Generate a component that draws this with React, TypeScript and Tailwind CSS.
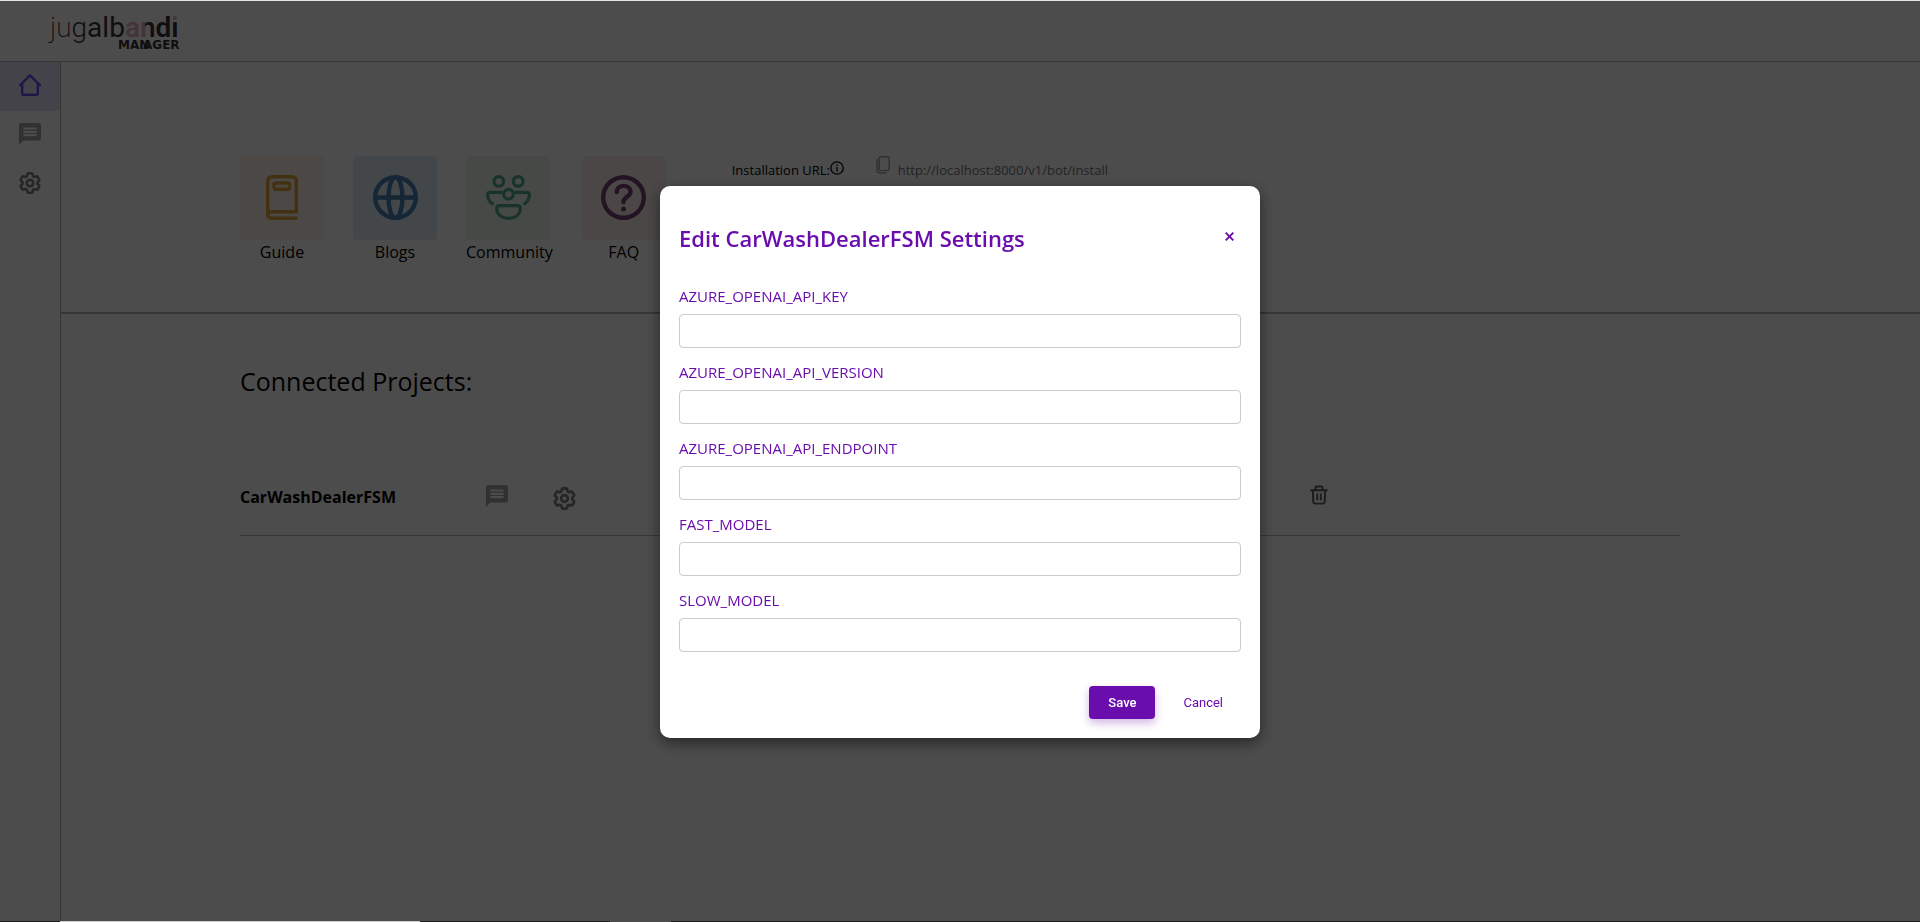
import React from "react";
import { HiOutlineCog6Tooth } from "react-icons/hi2";

const FIELDS = [
  "AZURE_OPENAI_API_KEY",
  "AZURE_OPENAI_API_VERSION",
  "AZURE_OPENAI_API_ENDPOINT",
  "FAST_MODEL",
  "SLOW_MODEL",
];

function Logo() {
  return (
    <svg viewBox="0 0 134 40" className="h-10 w-[134px] overflow-visible" role="img" aria-label="Jugalbandi Manager">
      <defs>
        <linearGradient id="logo-n" gradientUnits="userSpaceOnUse" x1="92" x2="108" y1="0" y2="0">
          <stop offset="0.34" stopColor="#e3adb7" />
          <stop offset="0.34" stopColor="#3a3034" />
        </linearGradient>
        <linearGradient id="logo-i" gradientUnits="userSpaceOnUse" x1="0" x2="0" y1="0" y2="26">
          <stop offset="0.35" stopColor="#e3adb7" />
          <stop offset="0.35" stopColor="#3a3034" />
        </linearGradient>
      </defs>
      <text y="26" fontSize="28" fontFamily="Roboto, sans-serif" fill="#3a3034">
        <tspan x="2" fontWeight="200">ju</tspan>
        <tspan fontWeight="300">g</tspan>
        <tspan fontWeight="400">alb</tspan>
        <tspan fontWeight="500" fill="#e3adb7">a</tspan>
        <tspan fontWeight="500" fill="url(#logo-n)">n</tspan>
        <tspan fontWeight="600">d</tspan>
        <tspan fontWeight="600" fill="url(#logo-i)">i</tspan>
      </text>
      <text y="38" fontSize="12" fontWeight="700" fontFamily="'DejaVu Sans', sans-serif" fill="#3a3034">
        <tspan x="70">MAN</tspan>
        <tspan x="95">AGER</tspan>
      </text>
    </svg>
  );
}

function HomeIcon() {
  return (
    <svg viewBox="0 0 22 22" className="size-[22px]" fill="none" stroke="#6a4ef5" strokeWidth="2.4" strokeLinecap="round" strokeLinejoin="round">
      <path d="M1.2 11.2 L11 1.4 L20.8 11.2 M3.2 9.5 V19.2 Q3.2 20.8 5 20.8 H17 Q18.8 20.8 18.8 19.2 V9.5" />
    </svg>
  );
}

function ChatIcon() {
  return (
    <svg viewBox="2 2 20 20" className="size-[22px]" fill="#a3a3a3">
      <path d="M20 2H4c-1.1 0-1.99.9-1.99 2L2 22l4-4h14c1.1 0 2-.9 2-2V4c0-1.1-.9-2-2-2zm-2 12H6v-2h12v2zm0-3H6V9h12v2zm0-3H6V6h12v2z" />
    </svg>
  );
}

function GuideIcon() {
  return (
    <svg viewBox="0 0 32 45" className="h-[45px] w-8" fill="none" stroke="#e0a63c" strokeWidth="3.4" strokeLinecap="round">
      <path d="M30.3 36.7 V6.5 Q30.3 1.7 25.5 1.7 H6.5 Q1.7 1.7 1.7 6.5 V39 Q1.7 43.3 6.5 43.3 H30.3 M30.3 36.7 H5 Q1.7 36.7 1.7 40" />
      <rect x="8" y="8" width="15.6" height="6.2" rx="2" />
    </svg>
  );
}

function BlogsIcon() {
  return (
    <svg viewBox="0 0 45 45" className="size-[45px]" fill="none" stroke="#4680b4" strokeWidth="4.4">
      <circle cx="22.5" cy="22.5" r="20.3" />
      <ellipse cx="22.5" cy="22.5" rx="7" ry="20.3" />
      <path d="M2 22.5 H43" />
    </svg>
  );
}

function CommunityIcon() {
  return (
    <svg viewBox="0 0 45 45" className="size-[45px]" fill="none" stroke="#50ac8c" strokeWidth="3.2">
      <circle cx="12.8" cy="6.4" r="4.8" />
      <circle cx="32.2" cy="6.4" r="4.8" />
      <circle cx="22.5" cy="19.2" r="4.8" />
      <path d="M16.5 17.3 H4 Q1.6 17.3 1.6 20 Q1.7 26 7.5 29.5 M28.5 17.3 H41 Q43.4 17.3 43.4 20 Q43.3 26 37.5 29.5" />
      <path d="M13.5 30.7 H31.5 Q34.3 30.7 34.3 33.2 C34.3 39.5 29.5 43.3 22.5 43.3 C15.5 43.3 10.7 39.5 10.7 33.2 Q10.7 30.7 13.5 30.7 Z" />
    </svg>
  );
}

function FaqIcon() {
  return (
    <svg viewBox="0 0 45 45" className="size-[45px]" fill="none" stroke="#754075" strokeWidth="4.4" strokeLinecap="round">
      <circle cx="22.5" cy="22.5" r="20.3" />
      <path d="M15.8 17 C15.8 8.8 29.5 8.8 29.5 17 C29.5 21.8 22.5 21.5 22.5 27" />
      <circle cx="22.5" cy="34" r="2.5" fill="#754075" stroke="none" />
    </svg>
  );
}

function InfoIcon() {
  return (
    <svg viewBox="0 0 14 14" className="size-3.5" fill="none" stroke="#000" strokeWidth="1.3">
      <circle cx="7" cy="7" r="6.2" />
      <path d="M7 6 V10.4 M7 3.5 V5" />
    </svg>
  );
}

function CopyIcon() {
  return (
    <svg viewBox="0 0 14 18" className="h-[18px] w-3.5" fill="none" stroke="#8c8c8c" strokeWidth="1.2">
      <rect x="3.2" y="0.9" width="10" height="13.6" rx="1.6" />
      <path d="M1 3 V13.5 Q1 16.8 4.3 16.8 H10.5" />
    </svg>
  );
}

function TrashIcon() {
  return (
    <svg viewBox="0 0 18 20" className="h-5 w-[18px]" fill="none" stroke="#5c5c5c" strokeWidth="1.9" strokeLinejoin="round">
      <path d="M0.5 5.2 H17.5 M5.5 5 V2.5 Q5.5 1.5 6.5 1.5 H11.5 Q12.5 1.5 12.5 2.5 V5 M2.8 5.2 L3.3 17 Q3.4 18.6 5 18.6 H13 Q14.6 18.6 14.7 17 L15.2 5.2" />
      <path d="M7.2 8.5 V15.2 M10.8 8.5 V15.2" />
    </svg>
  );
}

const LINKS = [
  { name: "Guide", tile: "bg-[#fbf0e9]", icon: <GuideIcon /> },
  { name: "Blogs", tile: "bg-[#e3edf4]", icon: <BlogsIcon /> },
  { name: "Community", tile: "bg-[#e9f5ec]", icon: <CommunityIcon /> },
  { name: "FAQ", tile: "bg-[#fbeeeb]", icon: <FaqIcon /> },
];

function Sidebar() {
  return (
    <nav className="flex w-[61px] shrink-0 flex-col border-r border-[#b8b8b8]">
      <a href="#home" aria-label="Home" className="flex h-[49px] items-center justify-center bg-[#e4e2f5] pb-1">
        <HomeIcon />
      </a>
      <a href="#chat" aria-label="Chat" className="flex h-[49px] items-center justify-center pb-1">
        <ChatIcon />
      </a>
      <a href="#settings" aria-label="Settings" className="flex h-[49px] items-center justify-center pb-1 text-[#808080]">
        <HiOutlineCog6Tooth className="size-[26px] stroke-[2.4]" />
      </a>
    </nav>
  );
}

function SettingsDialog() {
  return (
    <div className="fixed inset-0 z-10 flex items-center justify-center bg-black/70 pt-0.5">
      <form
        role="dialog"
        aria-modal="true"
        aria-labelledby="dialog-title"
        onSubmit={(e) => e.preventDefault()}
        className="w-[600px] max-w-full rounded-[10px] bg-white px-[19px] pt-9 pb-[19px] text-[#6a0dad] shadow-[0_5px_15px_rgba(0,0,0,0.5)]"
      >
        <div className="mb-[31px] flex items-start justify-between">
          <h2 id="dialog-title" className="text-[22px] leading-[33px] font-semibold">
            Edit CarWashDealerFSM Settings
          </h2>
          <button type="button" aria-label="Close" className="flex h-7 w-6 items-center justify-center">
            <svg viewBox="0 0 9 9" className="size-[9px]" stroke="currentColor" strokeWidth="1.9">
              <path d="M0.7 0.7 L8.3 8.3 M8.3 0.7 L0.7 8.3" />
            </svg>
          </button>
        </div>
        <div className="flex flex-col gap-3.5">
          {FIELDS.map((name) => (
            <div key={name} className="flex flex-col gap-2">
              <label htmlFor={name} className="text-[15px] leading-5">
                {name}
              </label>
              <input id={name} type="text" className="h-[34px] w-full rounded-[4px] border border-[#cccccc] px-2 outline-none" />
            </div>
          ))}
        </div>
        <div className="mt-[34px] flex justify-end gap-3 pr-0.5 font-[Roboto,sans-serif] text-[13px]">
          <button type="submit" className="h-[33px] w-[66px] rounded-[4px] bg-[#6a0dad] font-medium text-white shadow-[0_4px_8px_rgba(106,13,173,0.3)]">
            Save
          </button>
          <button type="button" className="h-[33px] px-4">
            Cancel
          </button>
        </div>
      </form>
    </div>
  );
}

export default function App() {
  return (
    <div className="flex min-h-screen flex-col bg-white font-['Open_Sans',sans-serif] text-black">
      <div className="relative z-20 h-px bg-[#dfe5e3]" />
      <header className="flex h-[61px] items-center border-b border-[#b8b8b8] pl-12">
        <Logo />
      </header>
      <div className="flex flex-1">
        <Sidebar />
        <main className="min-w-0 flex-1">
          <section className="flex border-b-2 border-[#b8b8b8] pt-[94px] pr-60 pb-12 pl-[179px]">
            <div className="flex gap-[29px]">
              {LINKS.map((link) => (
                <a key={link.name} href={`#${link.name.toLowerCase()}`} className="flex flex-col">
                  <span className={`flex size-[84px] items-center justify-center rounded-[4px] pb-px ${link.tile}`}>{link.icon}</span>
                  <span className="text-center text-base leading-6 font-medium">{link.name}</span>
                </a>
              ))}
            </div>
            <div className="ml-[66px] flex flex-col gap-2.5 text-[13px] leading-[18px]">
              <div className="flex">
                <div className="flex w-36 pt-[5px]">
                  <span className="font-medium">Installation URL:</span>
                  <span>
                    <InfoIcon />
                  </span>
                </div>
                <button type="button" aria-label="Copy installation URL" className="mr-2 h-[18px]">
                  <CopyIcon />
                </button>
                <span className="pt-[5px] text-[#757575]">http://localhost:8000/v1/bot/install</span>
              </div>
              <button type="button" aria-label="Copy" className="ml-36 h-[18px] w-3.5">
                <CopyIcon />
              </button>
            </div>
          </section>
          <section className="pt-[49px] pr-60 pl-[179px]">
            <h1 className="mb-[86px] text-[25px] leading-9 font-medium">Connected Projects:</h1>
            <div className="flex h-[51px] items-start border-b border-[#b8b8b8]">
              <span className="w-[246px] text-base leading-6 font-bold">CarWashDealerFSM</span>
              <button type="button" aria-label="Open chat" className="w-[65px]">
                <ChatIcon />
              </button>
              <button type="button" aria-label="Project settings" className="w-[759px] text-[#808080]">
                <HiOutlineCog6Tooth className="size-[27px] stroke-[2.4]" />
              </button>
              <button type="button" aria-label="Delete project">
                <TrashIcon />
              </button>
            </div>
          </section>
        </main>
      </div>
      <div className="relative z-20 flex h-px bg-[#1c1c1c]">
        <div className="ml-[60px] w-[360px] bg-[#cccccc]" />
        <div className="ml-[190px] w-[61px] bg-[#4c4c4c]" />
      </div>
      <SettingsDialog />
    </div>
  );
}
